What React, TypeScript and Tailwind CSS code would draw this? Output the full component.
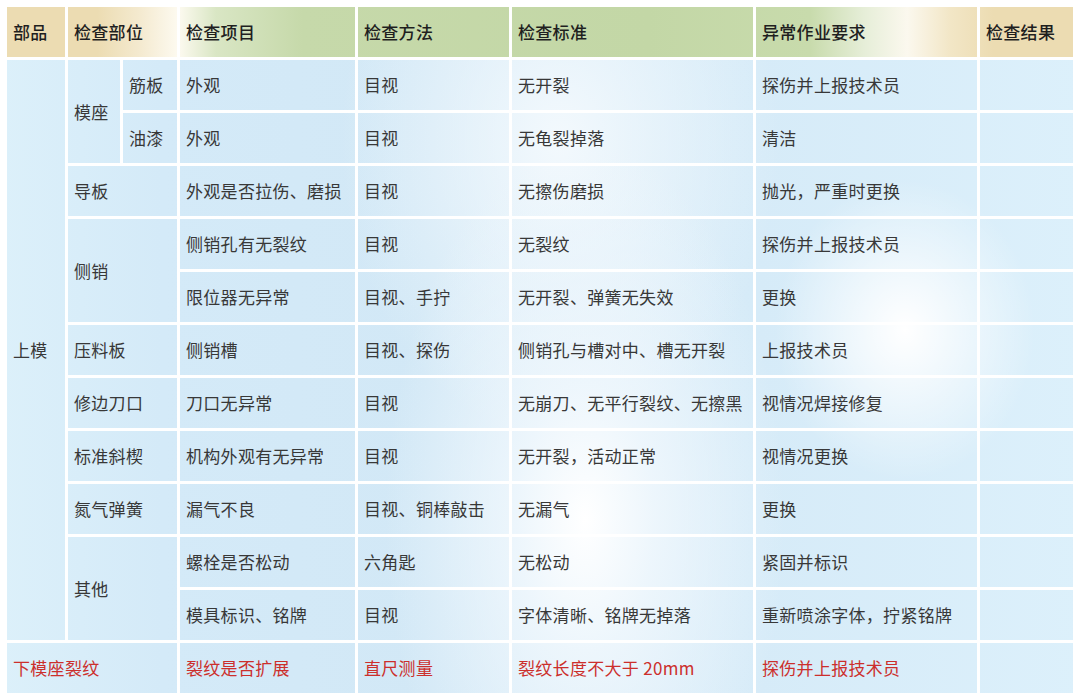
type Cell = {
  text: string;
  span?: string;
  red?: boolean;
};

const head: Cell[] = [
  { text: "部品" },
  { text: "检查部位", span: "col-span-2" },
  { text: "检查项目" },
  { text: "检查方法" },
  { text: "检查标准" },
  { text: "异常作业要求" },
  { text: "检查结果" },
];

const body: Cell[] = [
  // 模座
  { text: "上模", span: "row-span-11" },
  { text: "模座", span: "row-span-2" },
  { text: "筋板" },
  { text: "外观" },
  { text: "目视" },
  { text: "无开裂" },
  { text: "探伤并上报技术员" },
  { text: "" },
  { text: "油漆" },
  { text: "外观" },
  { text: "目视" },
  { text: "无龟裂掉落" },
  { text: "清洁" },
  { text: "" },
  // 导板
  { text: "导板", span: "col-span-2" },
  { text: "外观是否拉伤、磨损" },
  { text: "目视" },
  { text: "无擦伤磨损" },
  { text: "抛光，严重时更换" },
  { text: "" },
  // 侧销
  { text: "侧销", span: "col-span-2 row-span-2" },
  { text: "侧销孔有无裂纹" },
  { text: "目视" },
  { text: "无裂纹" },
  { text: "探伤并上报技术员" },
  { text: "" },
  { text: "限位器无异常" },
  { text: "目视、手拧" },
  { text: "无开裂、弹簧无失效" },
  { text: "更换" },
  { text: "" },
  { text: "压料板", span: "col-span-2" },
  { text: "侧销槽" },
  { text: "目视、探伤" },
  { text: "侧销孔与槽对中、槽无开裂" },
  { text: "上报技术员" },
  { text: "" },
  { text: "修边刀口", span: "col-span-2" },
  { text: "刀口无异常" },
  { text: "目视" },
  { text: "无崩刀、无平行裂纹、无擦黑" },
  { text: "视情况焊接修复" },
  { text: "" },
  { text: "标准斜楔", span: "col-span-2" },
  { text: "机构外观有无异常" },
  { text: "目视" },
  { text: "无开裂，活动正常" },
  { text: "视情况更换" },
  { text: "" },
  { text: "氮气弹簧", span: "col-span-2" },
  { text: "漏气不良" },
  { text: "目视、铜棒敲击" },
  { text: "无漏气" },
  { text: "更换" },
  { text: "" },
  // 其他
  { text: "其他", span: "col-span-2 row-span-2" },
  { text: "螺栓是否松动" },
  { text: "六角匙" },
  { text: "无松动" },
  { text: "紧固并标识" },
  { text: "" },
  { text: "模具标识、铭牌" },
  { text: "目视" },
  { text: "字体清晰、铭牌无掉落" },
  { text: "重新喷涂字体，拧紧铭牌" },
  { text: "" },
  // 下模
  { text: "下模座裂纹", span: "col-span-3", red: true },
  { text: "裂纹是否扩展", red: true },
  { text: "直尺测量", red: true },
  { text: "裂纹长度不大于 20mm", red: true },
  { text: "探伤并上报技术员", red: true },
  { text: "" },
];

const App = () => {
  return (
    <div className="min-h-screen bg-white pl-[7px] pt-[7px] font-['Noto_Sans_CJK_SC','Noto_Sans',sans-serif]">
      <div className="grid w-max grid-cols-[58px_52px_54px_175px_151px_241px_221px_93px] auto-rows-[50px] gap-[3px] bg-white">
        {head.map((c, i) => (
          <div
            key={"h" + i}
            className={`${c.span ?? ""} flex items-center pl-[6px] text-[17px] tracking-[0.3px] font-medium text-[#1f1f1f] bg-fixed bg-[linear-gradient(90deg,#ecdcb2_0%,#ecdcb2_9%,#f4ead0_13%,#fdfaf0_16.5%,#d9e6c4_20%,#c6d9aa_28%,#c3d7a6_60%,#c8dbac_75%,#e6eed8_80%,#fbf8ee_84%,#f2e6c6_88%,#ecdcb2_92%,#ecdcb2_100%)]`}
          >
            {c.text}
          </div>
        ))}
        {body.map((c, i) => (
          <div
            key={"b" + i}
            className={`${c.span ?? ""} flex items-center pl-[6px] text-[17px] tracking-[0.3px] ${
              c.red ? "text-[#cc2f2c]" : "text-[#383838]"
            } bg-fixed bg-[radial-gradient(130px_150px_at_905px_330px,#ffffff_0%,rgba(255,255,255,0)_100%),radial-gradient(200px_380px_at_585px_520px,#ffffff_0%,rgba(241,248,253,0.85)_35%,rgba(220,238,249,0)_100%),radial-gradient(220px_300px_at_560px_140px,#f3f9fd_0%,rgba(243,249,253,0)_100%),linear-gradient(90deg,#dcf0fa_0%,#d4eaf8_15%,#d2e8f6_40%,#d6ebf8_70%,#dcf0fb_100%)]`}
          >
            {c.text}
          </div>
        ))}
      </div>
    </div>
  );
};

export default App;
